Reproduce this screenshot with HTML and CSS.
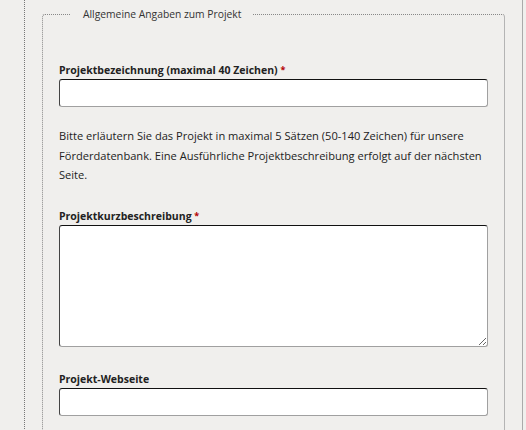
FILE: index.html
```html
<!DOCTYPE html>
<html lang="de">
<head>
<meta charset="utf-8">
<title>Allgemeine Angaben zum Projekt</title>
<link rel="stylesheet" href="styles.css">
</head>
<body>
<div class="page">
  <fieldset class="group">
    <legend class="group-title">Allgemeine Angaben zum Projekt</legend>

    <div class="field">
      <label class="field-label" for="name">Projektbezeichnung (maximal 40 Zeichen) <span class="req">*</span></label>
      <input class="text-input" id="name" type="text">
    </div>

    <p class="hint">Bitte erläutern Sie das Projekt in maximal 5 Sätzen (50-140 Zeichen) für unsere Förderdatenbank. Eine Ausführliche Projektbeschreibung erfolgt auf der nächsten Seite.</p>

    <div class="field">
      <label class="field-label" for="short">Projektkurzbeschreibung <span class="req">*</span></label>
      <textarea class="text-area" id="short"></textarea>
    </div>

    <div class="field">
      <label class="field-label" for="web">Projekt-Webseite</label>
      <input class="text-input" id="web" type="text">
    </div>
  </fieldset>
</div>
</body>
</html>
```

FILE: styles.css
```css
html, body {
  margin: 0;
  padding: 0;
  background: #f0efed;
}

body {
  font-family: "Open Sans", "Noto Sans", sans-serif;
  color: #222;
  overflow: hidden;
}

.page {
  margin-left: 24px;
  width: 463px;
  min-height: 430px;
  border-left: 1px dotted #777;
  border-right: 1px solid #aaa;
  padding: 6px 17px 0 17px;
}

.group {
  margin: 0;
  padding: 40px 16px 20px 16px;
  border: 1px dotted #888;
  border-right: 1px solid #b4b4b4;
  border-radius: 3px;
  min-width: 0;
}

.group-title {
  margin-left: 12px;
  padding: 0 12px;
  font-size: 10.3px;
  line-height: 16px;
  color: #333;
}

.field-label {
  display: block;
  font-size: 10.5px;
  font-weight: bold;
  line-height: 16px;
  margin-bottom: 1px;
  color: #222;
}

.req {
  color: #b40000;
  font-size: 9px;
  vertical-align: 1px;
}

.text-input,
.text-area {
  display: block;
  width: 100%;
  box-sizing: border-box;
  margin: 0;
  background: #fff;
  border: 1px solid;
  border-color: #111 #a0a0a0 #a0a0a0 #444;
  border-radius: 3px;
  font-family: inherit;
  font-size: 12px;
}

.text-input {
  height: 28px;
}

.text-area {
  height: 122px;
  resize: both;
}

.hint {
  margin: 19px 0 23px 0;
  font-size: 11.1px;
  line-height: 19.5px;
  color: #222;
}

.field + .field {
  margin-top: 24px;
}
```
